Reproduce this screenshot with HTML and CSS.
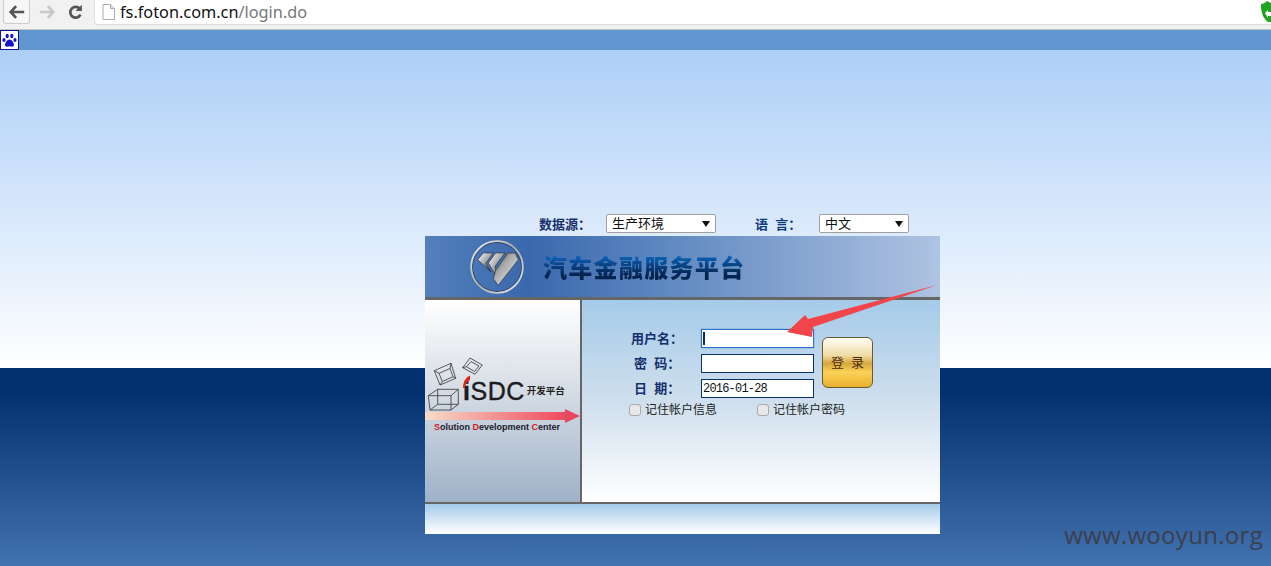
FILE: index.html
```html
<!DOCTYPE html>
<html lang="zh-CN">
<head>
    <meta charset="UTF-8">
    <title>汽车金融服务平台</title>
    <link rel="stylesheet" href="styles.css">
</head>
<body>
<div class="chrome">
    <div class="navBtn backBtn">
        <svg width="18" height="18" viewBox="0 0 20 18"><path d="M9 2.500 3 9l6 6.500M3.500 9H18" fill="none" stroke="#555" stroke-width="3"/></svg>
    </div>
    <div class="navBtn">
        <svg width="18" height="18" viewBox="0 0 20 18"><path d="M11 2.500 17 9l-6 6.500M16.500 9H2" fill="none" stroke="#c8c8c8" stroke-width="3"/></svg>
    </div>
    <div class="navBtn">
        <svg width="18" height="18" viewBox="0 0 20 18"><path d="M15 12a6 6 0 1 1-.5-6.200" fill="none" stroke="#555" stroke-width="3"/><path d="M16.500 1v7h-7z" fill="#555"/></svg>
    </div>
    <div class="urlBar">
        <svg class="pageIcon" width="13" height="16" viewBox="0 0 13 16"><path d="M1 .5h7.500l4 4v11H1z" fill="#fff" stroke="#aaa"/><path d="M8.500.5v4h4" fill="#ddd" stroke="#aaa"/></svg>
        <span class="host">fs.foton.com.cn</span><span class="path">/login.do</span>
    </div>
    <svg class="shield" width="10" height="21" viewBox="0 0 10 21"><path d="M0 3c2 0 4-1 6-3l4 2v19H7C2 17 0 12 0 3z" fill="#1fa51f"/><path d="M4 12l3-3v2h3v4H7v2z" fill="#fff"/></svg>
</div>
<div class="toolBand">
    <div class="pawBox">
        <svg width="15" height="15" viewBox="0 0 15 15"><g fill="#1414c8"><ellipse cx="2" cy="7" rx="1.600" ry="2.100"/><ellipse cx="5.200" cy="3" rx="1.600" ry="2.200"/><ellipse cx="9.800" cy="3" rx="1.600" ry="2.200"/><ellipse cx="13" cy="7" rx="1.600" ry="2.100"/><path d="M7.500 6.500c2.500 0 4.500 3.500 4.500 5.500 0 2-2.500 2-4.500 1.200C5.500 14 3 14 3 12c0-2 2-5.500 4.500-5.500z"/></g></svg>
    </div>
</div>
<div class="page">
    <div class="sourceRow">
        <span class="rowLabel sourceLabel">数据源：</span>
        <div class="fakeSelect sourceSelect">生产环境<i class="caret"></i></div>
        <span class="rowLabel langLabel">语&nbsp;&nbsp;言：</span>
        <div class="fakeSelect langSelect">中文<i class="caret"></i></div>
    </div>
    <div class="loginBox">
        <div class="loginHead">
            <svg class="fotonLogo" width="54" height="54" viewBox="0 0 54 54">
                <defs>
                    <linearGradient id="ring" x1="0" y1="0" x2="1" y2="1"><stop offset="0" stop-color="#f4f4f4"/><stop offset="0.5" stop-color="#aaa"/><stop offset="1" stop-color="#ececec"/></linearGradient>
                    <linearGradient id="blade" x1="0" y1="0" x2="1" y2="1"><stop offset="0" stop-color="#fff"/><stop offset="0.45" stop-color="#aaa"/><stop offset="1" stop-color="#1c1c1c"/></linearGradient>
                    <linearGradient id="bladeEnd" x1="0" y1="0" x2="1" y2="1"><stop offset="0" stop-color="#333"/><stop offset="0.4" stop-color="#aaa"/><stop offset="1" stop-color="#f4f4f4"/></linearGradient>
                </defs>
                <circle cx="27" cy="27" r="24.600" fill="none" stroke="#2a3a55" stroke-width="1"/>
                <circle cx="27" cy="27" r="25.800" fill="none" stroke="url(#ring)" stroke-width="1.800"/>
                <g stroke="#23262c" stroke-width="0.600">
                    <path d="M7.700 19.700 13.300 13h10L15.700 23.700 21 32z" fill="url(#blade)"/>
                    <path d="M18.300 23 25.700 13H35L25 26.300l2.700 12.400z" fill="url(#blade)"/>
                    <path d="M25.700 30.300 37.700 13H45l3.300 6.700-20 25.600-5-6.600z" fill="url(#bladeEnd)"/>
                </g>
            </svg>
            <span class="headTitle">汽车金融服务平台</span>
        </div>
        <div class="loginMain">
            <div class="isdcSide">
                <div class="isdcLogo">
                    <span class="isdcName"><b>i</b>SDC</span>
                    <span class="isdcCn">开发平台</span>
                    <svg class="cubes" width="60" height="60" viewBox="0 0 60 60">
                        <g fill="none" stroke="#333" stroke-width="0.800">
                            <path d="M2.300 39.700 11.700 33.300H32.300V48.300L25 54H4zM2.300 39.700H25V54M25 39.700 32.300 33.300M11.700 33.300V48.300H32.300M11.700 48.300 4 54"/>
                            <path d="M8.300 14.700 25 7.300 29.700 22.300 14 29zM13 17.300 24 12.500 27 20.700 16.300 25.500zM8.300 14.700 13 17.300M25 7.300 24 12.500M14 29 16.300 25.500M29.700 22.300 27 20.700"/>
                            <path d="M36.700 11.700 44 2 56.300 9 49 18.300zM40.500 10.700 45 5.500 53 10 48.500 15.500zM36.700 11.700 40.500 10.700"/>
                        </g>
                        <path d="M37 32C37 26 40 21 44 19.500V24C41 25.500 39.500 28 38.800 32z" fill="#e2231a"/>
                    </svg>
                </div>
                <div class="isdcArrow"></div>
                <div class="isdcSlogan"><b>S</b>olution <b>D</b>evelopment <b>C</b>enter</div>
            </div>
            <div class="formSide">
                <div class="formGrid">
                    <div class="fields">
                        <div class="fieldRow">
                            <label class="fieldLabel">用户名：</label>
                            <div class="textInput focused"><i class="cursor"></i></div>
                        </div>
                        <div class="fieldRow">
                            <label class="fieldLabel pad">密&nbsp;&nbsp;码：</label>
                            <div class="textInput"></div>
                        </div>
                        <div class="fieldRow">
                            <label class="fieldLabel pad">日&nbsp;&nbsp;期：</label>
                            <div class="textInput">2016-01-28</div>
                        </div>
                    </div>
                    <div class="loginBtn">登&nbsp;&nbsp;录</div>
                </div>
                <div class="checkRow">
                    <span class="checkItem"><i class="checkBox"></i>记住帐户信息</span>
                    <span class="checkItem"><i class="checkBox"></i>记住帐户密码</span>
                </div>
            </div>
        </div>
        <div class="loginFoot"></div>
        <svg class="redArrow" width="154" height="54" viewBox="0 0 154 54"><path d="M1 48 19 31l3 4L151 1 27 43l-1 10z" fill="#f2454b"/></svg>
    </div>
    <div class="watermark">www.wooyun.org</div>
</div>
</body>
</html>
```

FILE: styles.css
```css
body {
    margin: 0;
    height: 566px;
    overflow: hidden;
    font-family: "Liberation Sans", "Noto Sans CJK SC", sans-serif;
}

/* browser bar */
.chrome {
    display: flex;
    align-items: flex-start;
    height: 29px;
    padding-left: 3px;
    background: #f1f1f1;
    border-bottom: 1px solid #c4c4c4;
}
.navBtn {
    display: flex;
    align-items: center;
    justify-content: center;
    width: 29px;
    height: 24px;
    box-sizing: border-box;
}
.backBtn {
    width: 27px;
    margin-right: 2px;
    border: 1px solid #ccc;
    border-top: 0;
    border-radius: 0 0 3px 3px;
    background: #f6f6f6;
}
.urlBar {
    flex: 1;
    display: flex;
    align-items: center;
    height: 24px;
    margin-left: 4px;
    padding-left: 7px;
    background: #fff;
    border: 1px solid #ddd;
    border-right: 0;
    border-top: 0;
    border-radius: 0 0 0 3px;
    font-family: "Noto Sans", sans-serif;
    font-size: 16.300px;
    color: #111;
}
.pageIcon {
    margin-right: 5px;
}
.path {
    color: #777;
}
.shield {
    position: absolute;
    top: 1px;
    right: 0;
}
.toolBand {
    height: 20px;
    background: #6097d0;
}
.pawBox {
    display: flex;
    align-items: center;
    justify-content: center;
    width: 17px;
    height: 18px;
    background: #fff;
    border: 1px solid #14148c;
}

/* page */
.page {
    position: relative;
    height: 516px;
    padding-top: 162px;
    padding-left: 425px;
    box-sizing: border-box;
    background: linear-gradient(to bottom, #adcff7 0, #ffffff 318px, #03306e 318px, #03306e 340px, #4272af 516px);
}
.sourceRow {
    display: flex;
    align-items: center;
    height: 23px;
    font-size: 13px;
}
.rowLabel {
    font-weight: bold;
    color: #14306e;
}
.sourceLabel {
    margin-left: 114px;
    width: 67px;
}
.langLabel {
    margin-left: 39px;
    width: 64px;
    color: #0c3a80;
}
.fakeSelect {
    position: relative;
    height: 19px;
    line-height: 18px;
    padding-left: 5px;
    box-sizing: border-box;
    background: #fff;
    border: 1px solid #a0a0a0;
    border-radius: 2px;
    font-size: 13px;
    color: #111;
}
.sourceSelect {
    width: 110px;
}
.langSelect {
    width: 90px;
}
.caret {
    position: absolute;
    top: 6px;
    right: 5px;
    border-left: 4px solid transparent;
    border-right: 4px solid transparent;
    border-top: 6px solid #111;
}
.loginBox {
    position: relative;
    width: 515px;
    margin-top: 1px;
}
.loginHead {
    display: flex;
    align-items: center;
    height: 64px;
    padding-left: 45px;
    box-sizing: border-box;
    background: linear-gradient(to right, #5480bb 0, #3a68ad 20%, #5c86bf 45%, #afc3e2 100%);
    border-bottom: 3px solid #666;
}
.fotonLogo {
    flex: none;
}
.headTitle {
    margin-left: 19px;
    font-family: "Noto Sans CJK SC", sans-serif;
    font-size: 24px;
    font-weight: 900;
    letter-spacing: 1.300px;
    background: linear-gradient(to bottom, #0b5db0 25%, #04224e 75%);
    -webkit-background-clip: text;
    background-clip: text;
    color: transparent;
}
.loginMain {
    display: flex;
    height: 202px;
}
.isdcSide {
    width: 155px;
    flex: none;
    border-right: 2px solid #666;
    background: linear-gradient(to bottom, #ffffff 0, #dfe4ea 35%, #9fb2c8 100%);
    overflow: hidden;
}
.isdcLogo {
    position: relative;
    display: flex;
    align-items: flex-end;
    height: 75px;
    margin-top: 29px;
    padding-left: 38px;
    box-sizing: border-box;
}
.cubes {
    position: absolute;
    left: 1px;
    top: 27px;
}
.isdcName {
    font-size: 25px;
    line-height: 26px;
    letter-spacing: 0.5px;
    -webkit-text-stroke: 0.4px #1c1c1c;
    color: #1c1c1c;
}
.isdcCn {
    margin: 0 0 7px 2px;
    font-size: 9.500px;
    line-height: 12px;
    font-weight: bold;
    color: #222;
}
.isdcArrow {
    position: relative;
    width: 140px;
    height: 8px;
    margin-top: 8px;
    background: linear-gradient(to right, #f7dcc8, #ee4a5e);
}
.isdcArrow::after {
    content: "";
    position: absolute;
    left: 140px;
    top: -3px;
    border-left: 15px solid #e8485e;
    border-top: 7px solid transparent;
    border-bottom: 7px solid transparent;
}
.isdcSlogan {
    margin: 2px 0 0 9px;
    font-size: 9px;
    line-height: 10px;
    font-weight: bold;
    white-space: nowrap;
    color: #20202a;
}
.isdcSlogan b {
    color: #d02020;
}
.formSide {
    flex: 1;
    padding: 29px 0 0 47px;
    background: linear-gradient(to bottom, #a5cbe9 0, #cfdfed 50%, #ffffff 100%);
}
.formGrid {
    display: flex;
    align-items: flex-start;
}
.fields {
    display: flex;
    flex-direction: column;
    gap: 6px;
}
.fieldRow {
    display: flex;
    align-items: center;
    height: 19px;
}
.fieldLabel {
    width: 72px;
    padding-left: 2px;
    padding-bottom: 3px;
    box-sizing: border-box;
    font-size: 13px;
    font-weight: bold;
    color: #14306e;
}
.fieldLabel.pad {
    padding-left: 5px;
}
.textInput {
    position: relative;
    width: 113px;
    height: 19px;
    line-height: 18px;
    padding-left: 1px;
    box-sizing: border-box;
    background: #fff;
    border: 1px solid #0a3068;
    font-family: "Liberation Mono", monospace;
    font-size: 12px;
    letter-spacing: -0.800px;
    color: #111;
}
.textInput.focused {
    border-color: #2f6fd0;
    box-shadow: 0 0 1px #2f6fd0;
}
.cursor {
    position: absolute;
    left: 1px;
    top: 2px;
    width: 2px;
    height: 13px;
    background: #0a2a6a;
}
.loginBtn {
    width: 51px;
    height: 51px;
    margin: 8px 0 0 8px;
    line-height: 50px;
    text-align: center;
    box-sizing: border-box;
    border: 1px solid #6b5a30;
    border-radius: 6px;
    background: linear-gradient(to bottom, #fffdf4 0, #f0dca8 35%, #d7a83c 52%, #fbd258 70%, #e7b030 100%);
    font-size: 13px;
    color: #4a2c14;
}
.checkRow {
    display: flex;
    margin: 5px 0 0 0;
    font-size: 12px;
    line-height: 14px;
    color: #222;
}
.checkItem {
    display: flex;
    align-items: center;
    width: 128px;
}
.checkBox {
    width: 10px;
    height: 10px;
    margin-right: 4px;
    border: 1px solid #aaa;
    border-radius: 3px;
    background: #e8e8e8;
}
.loginFoot {
    height: 30px;
    background: linear-gradient(to bottom, #a5cbe9 0, #ffffff 100%);
    border-top: 2px solid #666;
}
.redArrow {
    position: absolute;
    left: 361px;
    top: 48px;
}
.watermark {
    position: absolute;
    right: 8px;
    bottom: 15px;
    font-family: "Open Sans", sans-serif;
    font-size: 24px;
    letter-spacing: 0.300px;
    color: #3c3f4c;
}
```
